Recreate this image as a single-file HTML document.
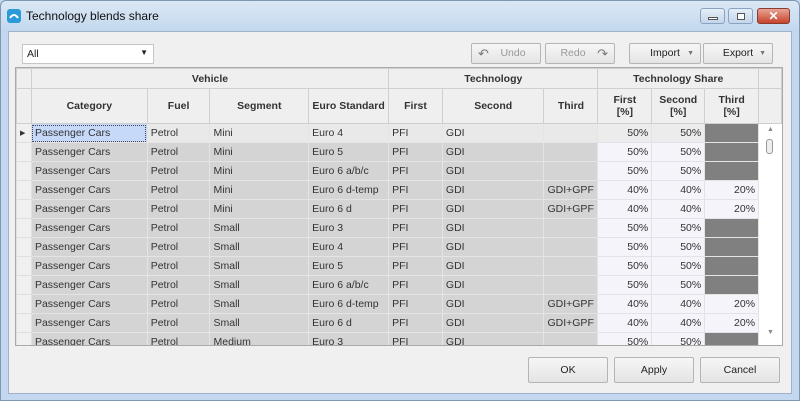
<!DOCTYPE html>
<html><head><style>
*{box-sizing:border-box;margin:0;padding:0}
body{width:800px;height:401px;overflow:hidden;background:#c4d9ee;font-family:"Liberation Sans",sans-serif;font-size:10.5px;color:#222;position:relative}
.frame{position:absolute;left:0;top:0;width:800px;height:401px;background:linear-gradient(#dbe8f5,#c3d8ee 30px,#c3d8ee);border:1px solid #7e97b3;border-radius:6px 6px 0 0}
.title{position:absolute;left:26px;top:9px;font-size:12px;color:#111}
.client{position:absolute;left:8px;top:31px;width:784px;height:363px;background:#f0f0f0;border:1px solid #9fb3c8}
.btn{position:absolute;background:linear-gradient(#f6f6f6,#e4e4e4);border:1px solid #b5b5b5;border-radius:2px;text-align:center;color:#222}
.grid{position:absolute;left:15px;top:67px;width:768px;height:279px;border:1px solid #a9a9a9;background:#fff;overflow:hidden}
table{border-collapse:collapse;table-layout:fixed;position:absolute;left:0;top:0}
td,th{border:1px solid #d6d6d6;white-space:nowrap;overflow:hidden;padding:0 3px;height:19px}
th{background:#efefef;font-weight:bold;color:#333;border-color:#cfcfcf}
tr.d td{background:#d4d4d4;border-color:#e4e4e4;color:#333}
tr.d td.s{background:#f4f4fa;text-align:right;border-color:#e2e2e8}
tr.d td.e{background:#808080}
tr.d td.i{background:#f0f0f0;border-color:#e0e0e0}
tr.f td{background:#e9e9e9}
tr.f td.s{background:#ececec}
</style></head><body>
<div class="frame"></div>
<svg style="position:absolute;left:7px;top:9px" width="14" height="14"><rect width="14" height="14" rx="3" fill="#2b9ad8"/><path d="M3 9 Q7 3 11 9" stroke="#fff" stroke-width="2" fill="none"/></svg>
<div class="title">Technology blends share</div>
<div style="position:absolute;left:700px;top:8px;width:25px;height:16px;border:1px solid #8aa3c0;border-radius:3px;background:linear-gradient(#e4eef8,#c4d6ea)"><div style="position:absolute;left:7px;top:8px;width:10px;height:3px;border:1px solid #555;background:#fff"></div></div>
<div style="position:absolute;left:728px;top:8px;width:25px;height:16px;border:1px solid #8aa3c0;border-radius:3px;background:linear-gradient(#e4eef8,#c4d6ea)"><div style="position:absolute;left:8px;top:4px;width:8px;height:7px;border:1px solid #555;background:#fff"></div></div>
<div style="position:absolute;left:757px;top:8px;width:33px;height:16px;border:1px solid #8b3b30;border-radius:3px;background:linear-gradient(#e8a493,#c5422c);color:#fff;font-weight:bold;text-align:center;line-height:14px;font-size:12px">✕</div>
<div class="client"></div>
<div style="position:absolute;left:22px;top:44px;width:132px;height:20px;background:#fff;border:1px solid #c6c6c6;padding:3px 4px">All<span style="position:absolute;right:5px;top:3px;font-size:8px">▼</span></div>
<div class="btn" style="left:471px;top:43px;width:70px;height:21px;color:#999;line-height:19px"><span style="position:absolute;left:6px;color:#777;font-size:13px">↶</span><span style="margin-left:14px">Undo</span></div>
<div class="btn" style="left:545px;top:43px;width:70px;height:21px;color:#999;line-height:19px"><span style="margin-right:14px">Redo</span><span style="position:absolute;right:6px;color:#777;font-size:13px">↷</span></div>
<div class="btn" style="left:629px;top:43px;width:72px;height:21px;line-height:19px">Import<span style="position:absolute;right:6px;font-size:7px;color:#777">▼</span></div>
<div class="btn" style="left:703px;top:43px;width:70px;height:21px;line-height:19px">Export<span style="position:absolute;right:6px;font-size:7px;color:#777">▼</span></div>
<div class="grid"><table>
<colgroup><col style="width:15px"><col style="width:116px"><col style="width:63px"><col style="width:99px"><col style="width:80px"><col style="width:54px"><col style="width:102px"><col style="width:54px"><col style="width:54px"><col style="width:53px"><col style="width:54px"><col style="width:23px"></colgroup>
<tr><th style="height:20px"></th><th colspan="4">Vehicle</th><th colspan="3">Technology</th><th colspan="3">Technology Share</th><th></th></tr>
<tr><th style="height:35px"></th><th>Category</th><th>Fuel</th><th>Segment</th><th>Euro Standard</th><th>First</th><th>Second</th><th>Third</th><th>First<br>[%]</th><th>Second<br>[%]</th><th>Third<br>[%]</th><th></th></tr>
<tr class="d f"><td class="i" style="font-size:7px">▶</td><td style="background:#c6d9f9;outline:1px dotted #445;outline-offset:-2px">Passenger Cars</td><td>Petrol</td><td>Mini</td><td>Euro 4</td><td>PFI</td><td>GDI</td><td></td><td class="s">50%</td><td class="s">50%</td><td class="e"></td><td rowspan="12" style="background:#fff;border:none;vertical-align:top;position:relative"><div style="position:absolute;left:8px;top:2px;font-size:7px;color:#888">▲</div><div style="position:absolute;left:7px;top:15px;width:7px;height:15px;border:1px solid #999;border-radius:3px;background:#eee"></div><div style="position:absolute;left:8px;top:205px;font-size:7px;color:#888">▼</div></td></tr>
<tr class="d"><td class="i"></td><td>Passenger Cars</td><td>Petrol</td><td>Mini</td><td>Euro 5</td><td>PFI</td><td>GDI</td><td></td><td class="s">50%</td><td class="s">50%</td><td class="e"></td></tr>
<tr class="d"><td class="i"></td><td>Passenger Cars</td><td>Petrol</td><td>Mini</td><td>Euro 6 a/b/c</td><td>PFI</td><td>GDI</td><td></td><td class="s">50%</td><td class="s">50%</td><td class="e"></td></tr>
<tr class="d"><td class="i"></td><td>Passenger Cars</td><td>Petrol</td><td>Mini</td><td>Euro 6 d-temp</td><td>PFI</td><td>GDI</td><td>GDI+GPF</td><td class="s">40%</td><td class="s">40%</td><td class="s">20%</td></tr>
<tr class="d"><td class="i"></td><td>Passenger Cars</td><td>Petrol</td><td>Mini</td><td>Euro 6 d</td><td>PFI</td><td>GDI</td><td>GDI+GPF</td><td class="s">40%</td><td class="s">40%</td><td class="s">20%</td></tr>
<tr class="d"><td class="i"></td><td>Passenger Cars</td><td>Petrol</td><td>Small</td><td>Euro 3</td><td>PFI</td><td>GDI</td><td></td><td class="s">50%</td><td class="s">50%</td><td class="e"></td></tr>
<tr class="d"><td class="i"></td><td>Passenger Cars</td><td>Petrol</td><td>Small</td><td>Euro 4</td><td>PFI</td><td>GDI</td><td></td><td class="s">50%</td><td class="s">50%</td><td class="e"></td></tr>
<tr class="d"><td class="i"></td><td>Passenger Cars</td><td>Petrol</td><td>Small</td><td>Euro 5</td><td>PFI</td><td>GDI</td><td></td><td class="s">50%</td><td class="s">50%</td><td class="e"></td></tr>
<tr class="d"><td class="i"></td><td>Passenger Cars</td><td>Petrol</td><td>Small</td><td>Euro 6 a/b/c</td><td>PFI</td><td>GDI</td><td></td><td class="s">50%</td><td class="s">50%</td><td class="e"></td></tr>
<tr class="d"><td class="i"></td><td>Passenger Cars</td><td>Petrol</td><td>Small</td><td>Euro 6 d-temp</td><td>PFI</td><td>GDI</td><td>GDI+GPF</td><td class="s">40%</td><td class="s">40%</td><td class="s">20%</td></tr>
<tr class="d"><td class="i"></td><td>Passenger Cars</td><td>Petrol</td><td>Small</td><td>Euro 6 d</td><td>PFI</td><td>GDI</td><td>GDI+GPF</td><td class="s">40%</td><td class="s">40%</td><td class="s">20%</td></tr>
<tr class="d"><td class="i"></td><td>Passenger Cars</td><td>Petrol</td><td>Medium</td><td>Euro 3</td><td>PFI</td><td>GDI</td><td></td><td class="s">50%</td><td class="s">50%</td><td class="e"></td></tr>
</table></div>
<div class="btn" style="left:528px;top:357px;width:80px;height:26px;line-height:24px">OK</div>
<div class="btn" style="left:614px;top:357px;width:80px;height:26px;line-height:24px">Apply</div>
<div class="btn" style="left:700px;top:357px;width:80px;height:26px;line-height:24px">Cancel</div>
</body></html>
